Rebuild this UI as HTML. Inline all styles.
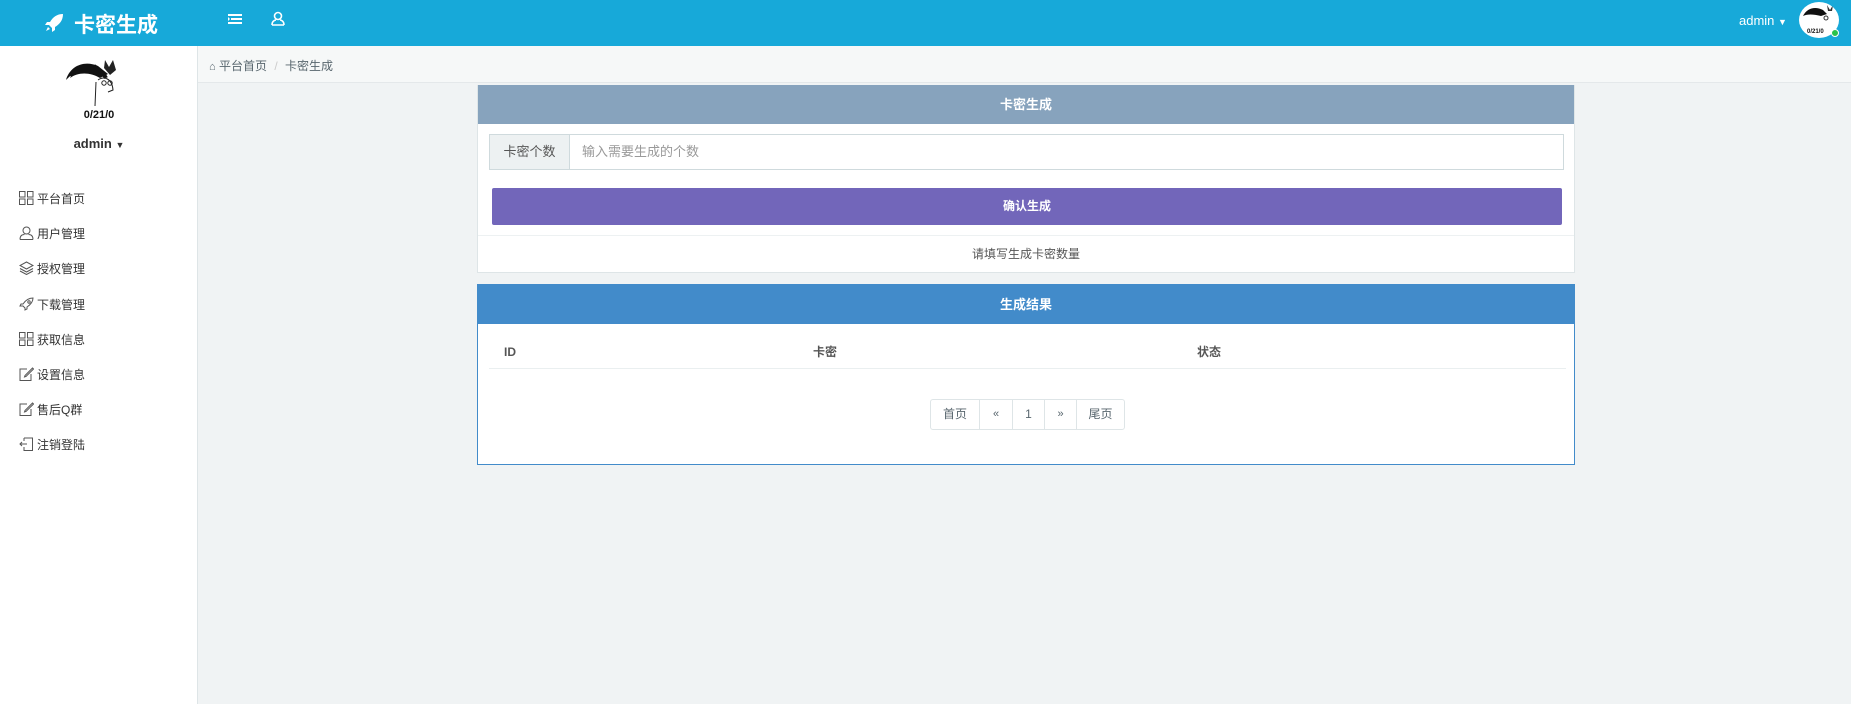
<!DOCTYPE html>
<html><head><meta charset="utf-8">
<style>
*{box-sizing:border-box;margin:0;padding:0}
body{width:1851px;height:704px;overflow:hidden;background:#f0f3f4;font-family:"Liberation Sans","Noto Sans CJK SC",sans-serif;font-size:13px;color:#58666e;position:relative}
.abs{position:absolute}
.hdr{left:0;top:0;width:1851px;height:46px;background:#17a9d9}
.side{left:0;top:46px;width:198px;height:658px;background:#fff;border-right:1px solid #dee5e7}
.bc{left:198px;top:46px;width:1653px;height:37px;background:#f6f8f8;border-bottom:1px solid #e4e8ea}
.menu{left:19px;font-size:12px;color:#333;display:flex;align-items:center;height:20px}
.menu svg{margin-right:3px}
.panel{left:477px;width:1098px;background:#fff}
.th{top:57px;height:20px;line-height:20px;font-weight:bold;font-size:12px;color:#555}
</style></head><body>
<div class="abs hdr"></div>
<svg class="abs" style="left:44px;top:13px" width="20" height="20" viewBox="0 0 20 20"><path d="M19 1 C13 1 9 4 6 9 L3 9 L1 12 L5 12 L8 15 L8 19 L11 17 L11 14 C16 11 19 7 19 1Z" fill="#fff"/><path d="M4 14 L2 18 L6 16Z" fill="#fff"/></svg>
<div class="abs" style="left:74px;top:9px;color:#fff;font-size:21px;font-weight:bold">卡密生成</div>
<svg class="abs" style="left:228px;top:13px" width="14" height="12" viewBox="0 0 14 12"><g fill="#fff"><rect x="0" y="1" width="14" height="2"/><rect x="3" y="5" width="11" height="2"/><rect x="0" y="9" width="14" height="2"/><path d="M0 4 L2 6 L0 8Z"/></g></svg>
<svg class="abs" style="left:271px;top:11px" width="14" height="15" viewBox="0 0 14 15"><g fill="none" stroke="#fff" stroke-width="1.6"><circle cx="7" cy="5" r="3.5"/><path d="M1 14 C1 10 4 9 5 9 M13 14 C13 10 10 9 9 9 M1 14 H13"/></g></svg>
<div class="abs" style="left:1739px;top:13px;color:#fff;font-size:13px">admin <span style="font-size:9px">▼</span></div>
<div class="abs" style="left:1799px;top:2px;width:40px;height:36px;border-radius:50%;background:#fff;overflow:hidden">
<svg width="40" height="36" viewBox="0 0 40 36"><path d="M4 14 C8 6 16 4 24 8 L28 12 L22 14 C14 12 8 12 4 14Z" fill="#111"/><path d="M28 3 L31 8 L34 3 L33 9 L29 9Z" fill="#333"/><circle cx="27" cy="16" r="2" fill="none" stroke="#333"/><text x="8" y="31" font-size="6" font-weight="bold" fill="#111">0/21/0</text></svg></div>
<div class="abs" style="left:1831px;top:29px;width:8px;height:8px;border-radius:50%;background:#27c24c;border:1px solid #fff"></div>

<div class="abs side"></div>
<svg class="abs" style="left:64px;top:58px" width="62" height="50" viewBox="0 0 62 50"><path d="M2 22 C6 8 20 2 34 8 L44 16 L36 20 C26 14 14 14 6 20 C8 16 6 18 2 22Z" fill="#111"/><path d="M30 8 C36 12 40 16 42 20" stroke="#111" stroke-width="4" fill="none"/><path d="M41 2 L45 9 L49 2 L52 12 L46 17 L40 10Z" fill="#222"/><path d="M34 22 C40 18 48 20 49 32 L44 34 M32 24 L31 48" fill="none" stroke="#222" stroke-width="1"/><circle cx="40" cy="25" r="2.2" fill="none" stroke="#222"/><circle cx="46" cy="25" r="2.2" fill="none" stroke="#222"/></svg>
<div class="abs" style="left:0;width:198px;top:109px;text-align:center;font-size:11px;font-weight:bold;color:#111">0/21/0</div>
<div class="abs" style="left:0;width:198px;top:136px;text-align:center;font-size:13px;font-weight:bold;color:#333">admin <span style="font-size:9px">▼</span></div>

<div class="abs menu" style="top:188px"><svg width="15" height="14" viewBox="0 0 15 14" fill="none" stroke="#555"><rect x=".5" y=".5" width="5.5" height="5.5"/><rect x="8.5" y=".5" width="5.5" height="5.5"/><rect x=".5" y="8" width="5.5" height="5.5"/><rect x="8.5" y="8" width="5.5" height="5.5"/></svg>平台首页</div>
<div class="abs menu" style="top:223px"><svg width="15" height="14" viewBox="0 0 15 14" fill="none" stroke="#555"><circle cx="7.5" cy="4.5" r="3.5"/><path d="M1 13.5 C1 9 4 8.5 5.5 8.5 M14 13.5 C14 9 11 8.5 9.5 8.5 M1 13.5 H14"/></svg>用户管理</div>
<div class="abs menu" style="top:258px"><svg width="15" height="14" viewBox="0 0 15 14" fill="none" stroke="#555"><path d="M7.5 1 L14 4.5 L7.5 8 L1 4.5Z M1 7.5 L7.5 11 L14 7.5 M1 10 L7.5 13.5 L14 10"/></svg>授权管理</div>
<div class="abs menu" style="top:294px"><svg width="15" height="14" viewBox="0 0 15 14" fill="none" stroke="#555"><path d="M14 1 C9 1 6 4 4 7 L2 7 L1 9 L4 9 L6 11 L6 13 L8 12 L8 10 C11 8 14 5 14 1Z"/><circle cx="10" cy="5" r="1.2"/></svg>下载管理</div>
<div class="abs menu" style="top:329px"><svg width="15" height="14" viewBox="0 0 15 14" fill="none" stroke="#555"><rect x=".5" y=".5" width="5.5" height="5.5"/><rect x="8.5" y=".5" width="5.5" height="5.5"/><rect x=".5" y="8" width="5.5" height="5.5"/><rect x="8.5" y="8" width="5.5" height="5.5"/></svg>获取信息</div>
<div class="abs menu" style="top:364px"><svg width="15" height="14" viewBox="0 0 15 14" fill="none" stroke="#555"><path d="M8 2 H1 V13.5 H12 V7 M13.5 1 L6 8.5 L5.5 10 L7 9.5 L14.5 2Z"/></svg>设置信息</div>
<div class="abs menu" style="top:399px"><svg width="15" height="14" viewBox="0 0 15 14" fill="none" stroke="#555"><path d="M8 2 H1 V13.5 H12 V7 M13.5 1 L6 8.5 L5.5 10 L7 9.5 L14.5 2Z"/></svg>售后Q群</div>
<div class="abs menu" style="top:434px"><svg width="15" height="14" viewBox="0 0 15 14" fill="none" stroke="#555"><path d="M5 1 H13.5 V13.5 H5 V10 M5 4 V1 M1 7 H8 M3 5 L1 7 L3 9"/></svg>注销登陆</div>

<div class="abs bc"></div>
<div class="abs" style="left:209px;top:57px;font-size:12px;color:#58666e"><span style="font-size:11px">&#8962;</span> 平台首页 <span style="color:#ccc;margin:0 4px">/</span> 卡密生成</div>

<div class="abs panel" style="top:85px;height:188px;border:1px solid #dee5e7;border-top:none">
 <div style="height:39px;background:#87a3bd;color:#fff;font-weight:bold;font-size:13px;text-align:center;line-height:39px">卡密生成</div>
 <div class="abs" style="left:11px;top:49px;width:1075px;height:36px;border:1px solid #cfdadd;display:flex">
  <div style="width:80px;background:#edf1f2;border-right:1px solid #cfdadd;text-align:center;line-height:34px;color:#555">卡密个数</div>
  <div style="padding-left:12px;line-height:34px;color:#999">输入需要生成的个数</div>
 </div>
 <div class="abs" style="left:14px;top:103px;width:1070px;height:37px;background:#7266ba;border-radius:2px;color:#fff;font-weight:bold;font-size:12px;text-align:center;line-height:37px">确认生成</div>
 <div class="abs" style="left:0;top:150px;width:1096px;border-top:1px solid #edf1f2"></div>
 <div class="abs" style="left:0;top:160px;width:1096px;text-align:center;font-size:12px;color:#555">请填写生成卡密数量</div>
</div>
<div class="abs panel" style="top:284px;height:181px;border:1px solid #428bca">
 <div style="height:39px;background:#428bca;color:#fff;font-weight:bold;font-size:13px;text-align:center;line-height:39px">生成结果</div>
 <div class="abs th" style="left:26px">ID</div>
 <div class="abs th" style="left:335px">卡密</div>
 <div class="abs th" style="left:719px">状态</div>
 <div class="abs" style="left:11px;top:83px;width:1077px;border-top:1px solid #eaeff0"></div>
 <div class="abs" style="left:452px;top:114px;height:31px;display:flex;border:1px solid #dee5e7;border-radius:3px;font-size:12px;color:#58666e">
  <div style="width:49px;text-align:center;line-height:29px;border-right:1px solid #dee5e7">首页</div>
  <div style="width:33px;text-align:center;line-height:29px;border-right:1px solid #dee5e7;font-size:11px">«</div>
  <div style="width:32px;text-align:center;line-height:29px;border-right:1px solid #dee5e7">1</div>
  <div style="width:32px;text-align:center;line-height:29px;border-right:1px solid #dee5e7;font-size:11px">»</div>
  <div style="width:47px;text-align:center;line-height:29px">尾页</div>
 </div>
</div>
</body></html>
